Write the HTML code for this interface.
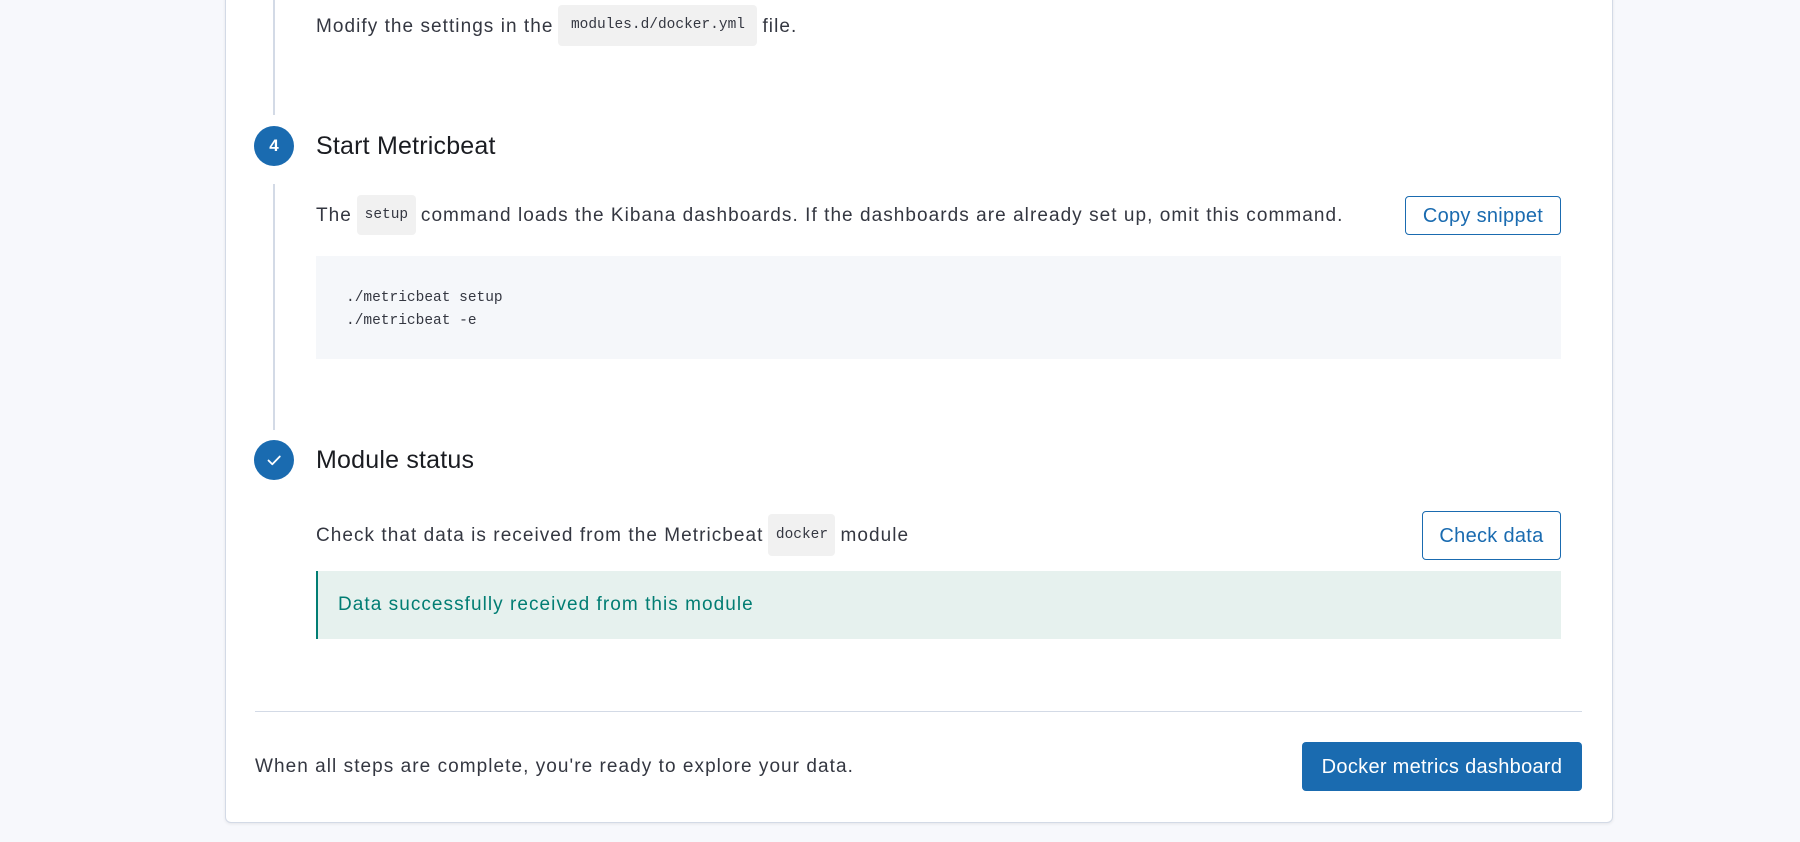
<!DOCTYPE html>
<html><head><meta charset="utf-8"><style>
*{box-sizing:border-box;margin:0;padding:0}
body{width:1800px;height:842px;background:#f7f8fc;font-family:"Liberation Sans",sans-serif;color:#343741;position:relative;overflow:hidden}
.panel{position:absolute;left:225px;top:-10px;width:1388px;height:833px;background:#fff;border:1px solid #d3dae6;border-radius:6px;box-shadow:0 1px 3px rgba(0,0,0,.08)}
.a{position:absolute;white-space:nowrap}
.row{position:absolute;white-space:nowrap;display:flex;align-items:center;font-size:19px;letter-spacing:1.05px;padding-top:2px}
.row .code{margin-top:-2px}
.t{font-size:19px;letter-spacing:1.05px;line-height:22px}
.code{display:inline-block;background:#f1f1f1;border-radius:4px;font-family:"Liberation Mono",monospace;font-size:14.5px;letter-spacing:0;color:#343741;text-align:center;margin:0 5px}
.line{position:absolute;left:273px;width:2px;background:#d3dae6}
.circ{position:absolute;left:254px;width:40px;height:40px;border-radius:50%;background:#1a6bb0;color:#fff;font-weight:bold;font-size:17px;text-align:center;line-height:40px}
.h{font-size:25px;letter-spacing:0.2px;line-height:28px;color:#1a1c21}
.btn{position:absolute;border:1px solid #1a6bb0;border-radius:4px;color:#1a6bb0;font-size:20px;letter-spacing:0.3px;text-align:center;background:#fff}
</style></head><body>
<div class="panel"></div>
<div class="line" style="top:0;height:115px"></div>
<div class="line" style="top:184px;height:246px"></div>

<div class="row" style="left:316px;top:5px;height:41px">Modify the settings in the<span class="code" style="width:199px;height:41px;line-height:41px">modules.d/docker.yml</span>file.</div>

<div class="circ" style="top:126px">4</div>
<div class="a h" style="left:316px;top:132px">Start Metricbeat</div>

<div class="row" style="left:316px;top:195px;height:40px">The<span class="code" style="width:59px;height:40px;line-height:40px">setup</span>command loads the Kibana dashboards. If the dashboards are already set up, omit this command.</div>
<div class="btn" style="left:1405px;top:196px;width:156px;height:39px;line-height:38px">Copy snippet</div>

<div class="a" style="left:316px;top:256px;width:1245px;height:103px;background:#f5f7fa"></div>
<div class="a" style="left:346px;top:287px;font-family:'Liberation Mono',monospace;font-size:14.5px;line-height:23px;color:#343741">./metricbeat setup<br>./metricbeat -e</div>

<div class="circ" style="top:440px"><svg width="40" height="40" viewBox="0 0 40 40"><path d="M14.5 20.5l3.8 3.8 7.5-7.8" fill="none" stroke="#fff" stroke-width="1.8" stroke-linecap="round" stroke-linejoin="round"/></svg></div>
<div class="a h" style="left:316px;top:446px">Module status</div>

<div class="row" style="left:316px;top:514px;height:42px">Check that data is received from the Metricbeat<span class="code" style="width:67px;height:42px;line-height:42px">docker</span>module</div>
<div class="btn" style="left:1422px;top:511px;width:139px;height:49px;line-height:48px">Check data</div>

<div class="a" style="left:316px;top:571px;width:1245px;height:68px;background:#e6f1ee;border-left:2px solid #017d73"></div>
<div class="a t" style="left:338px;top:594px;color:#017d73">Data successfully received from this module</div>

<div class="a" style="left:255px;top:711px;width:1327px;height:1px;background:#d3dae6"></div>
<div class="a t" style="left:255px;top:756px">When all steps are complete, you're ready to explore your data.</div>
<div class="a" style="left:1302px;top:742px;width:280px;height:49px;line-height:50px;background:#1a6bb0;border-radius:4px;color:#fff;font-size:20px;letter-spacing:0.3px;text-align:center">Docker metrics dashboard</div>
</body></html>
